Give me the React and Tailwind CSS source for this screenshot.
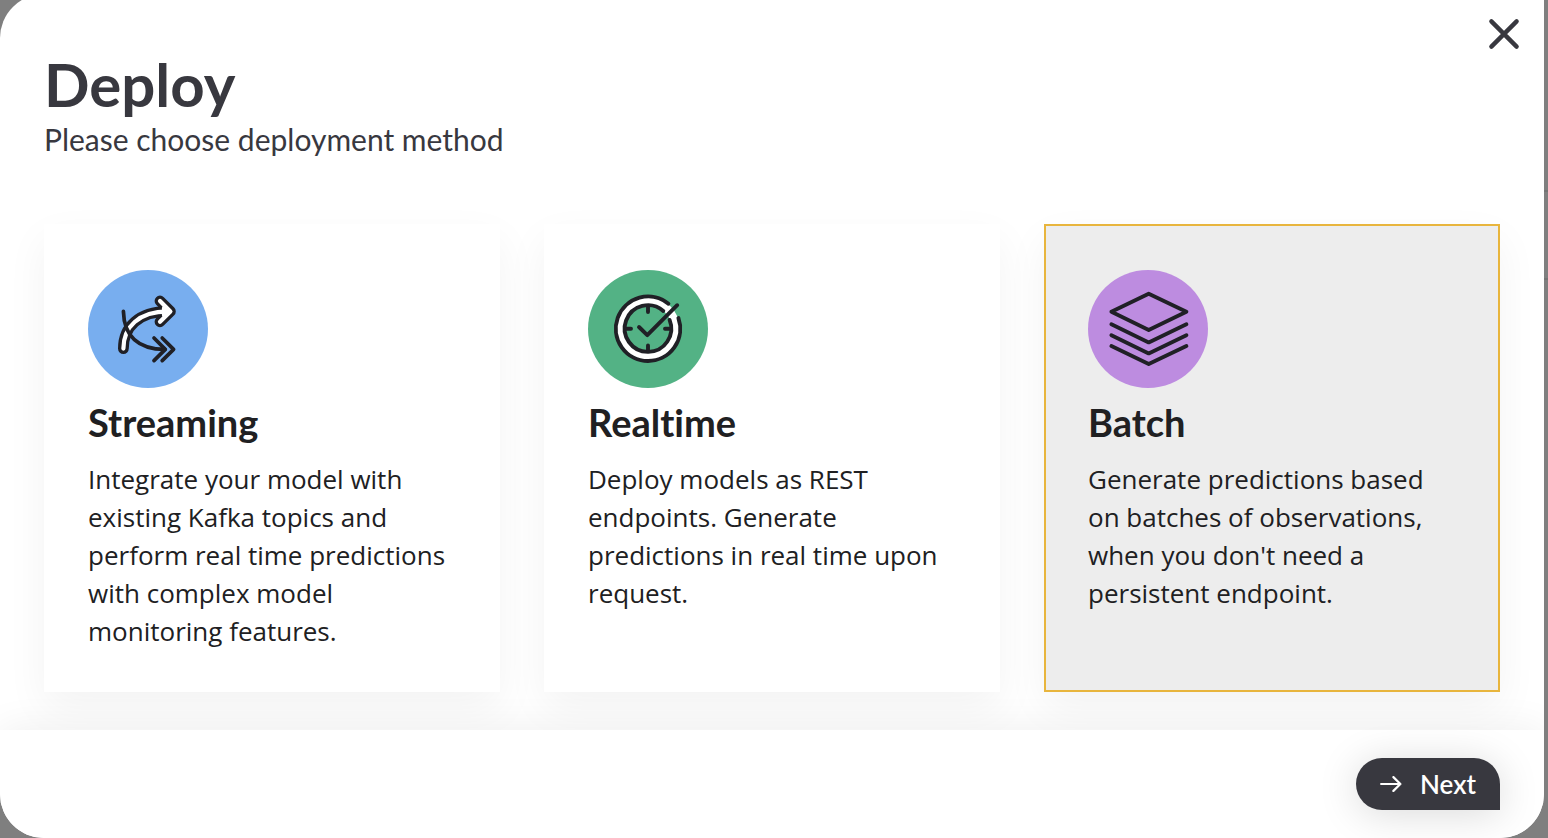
import { useState } from "react";

function StreamingIcon() {
	return (
		<svg viewBox="0 0 120 118" className="w-[120px] h-[118px]" fill="none" strokeLinecap="round" strokeLinejoin="round" aria-hidden="true">
			<ellipse cx="60" cy="59" rx="60" ry="59" fill="#78AEEF" />
			{/* Thick arrow: dark outline with the white body on top */}
			<g stroke="#202026" strokeWidth="10.8">
				<path d="M35.4 78.6C35.4 57 50.5 41.6 80 41.4" />
				<path d="M72 31L82.4 41.4L72 51.8" />
			</g>
			<g stroke="#ffffff" strokeWidth="4.2">
				<path d="M35.4 78.6C35.4 57 50.5 41.6 80 41.4" />
				<path d="M72 31L82.4 41.4L72 51.8" />
				<path d="M76 38L80 41.4L76 45Z" fill="#ffffff" />
			</g>
			<g stroke="#202026" strokeWidth="3.7">
				<path d="M35.4 41.4C36 66 50 79.4 77 79.4" />
				<path d="M66 68L77.3 79.4L66 90.6" />
				<path d="M74.2 68L85.6 79.4L74.2 90.6" />
			</g>
		</svg>
	);
}

function RealtimeIcon() {
	return (
		<svg viewBox="0 0 120 118" className="w-[120px] h-[118px]" fill="none" strokeLinecap="round" strokeLinejoin="round" aria-hidden="true">
			<ellipse cx="60" cy="59" rx="60" ry="59" fill="#53B285" />
			<circle cx="60" cy="58.7" r="27.7" stroke="#ffffff" strokeWidth="8" />
			<g stroke="#202026" strokeWidth="3.9">
				<path d="M80.4 33.8A32.2 32.2 0 1 0 90.4 48" />
				<path d="M75.3 41A23.3 23.3 0 1 0 81.6 49.9" />
				<path d="M60 37V42M60 75.5V81M38 58.7H43M77 58.7H82" />
				<path d="M51 57L59.3 65.2L89.2 35.2" />
			</g>
		</svg>
	);
}

function BatchIcon() {
	return (
		<svg viewBox="0 0 120 118" className="w-[120px] h-[118px]" fill="none" strokeLinecap="round" strokeLinejoin="round" aria-hidden="true">
			<ellipse cx="60" cy="59" rx="60" ry="59" fill="#BD8CE0" />
			<g stroke="#202026" strokeWidth="3.9">
				<path d="M60.7 23.7L98.4 41.7L60.7 60L23.4 41.7Z" />
				<path d="M23.4 54.3L60.7 72.4L98.4 54.3" />
				<path d="M23.4 65.2L60.7 83.4L98.4 65.2" />
				<path d="M23.4 76.1L60.7 94.1L98.4 76.1" />
			</g>
		</svg>
	);
}

const methods = [
	{
		id: "streaming",
		name: "Streaming",
		icon: StreamingIcon,
		description: "Integrate your model with existing Kafka topics and perform real time predictions with complex model monitoring features.",
	},
	{
		id: "realtime",
		name: "Realtime",
		icon: RealtimeIcon,
		description: "Deploy models as REST endpoints. Generate predictions in real time upon request.",
	},
	{
		id: "batch",
		name: "Batch",
		icon: BatchIcon,
		description: "Generate predictions based on batches of observations, when you don't need a persistent endpoint.",
	},
];

function App() {

	const [selected, setSelected] = useState("batch");

	return (
		<div className="relative min-h-screen overflow-hidden bg-[#7f7f7f] pr-1 font-['Lato',sans-serif] [font-variant-ligatures:none]">

			{/* Table lines of the page behind the dialog */}
			<div className="absolute right-0 top-[190px] h-[90px] w-8 border-y-2 border-[#747474]" />

			{/* Dialog */}
			<div role="dialog" aria-labelledby="deploy-title" className="relative -mt-[6px] flex min-h-[844px] flex-col overflow-hidden rounded-[44px] rounded-tr-none bg-white">

				{/* Header */}
				<header className="flex items-start justify-between pl-11 pr-6 pt-6 text-[#38383f]">
					<div className="pt-8">
						<h1 id="deploy-title" className="text-[60px] leading-[68px] font-bold">Deploy</h1>
						<p className="text-[30px] leading-[42px]">Please choose deployment method</p>
					</div>
					<button type="button" aria-label="Close">
						<svg viewBox="0 0 32 32" className="size-8" fill="none" stroke="currentColor" strokeWidth="4.4" strokeLinecap="round" aria-hidden="true">
							<path d="M3.4 3.4L28.6 28.6M28.6 3.4L3.4 28.6" />
						</svg>
					</button>
				</header>

				{/* Deployment methods */}
				<div role="radiogroup" aria-label="Deployment method" className="grid flex-1 grid-cols-3 gap-11 px-11 pb-[38px] pt-16">
					{methods.map((method) => (
						<label
							key={method.id}
							className={
								"flex cursor-pointer flex-col border-2 px-[42px] pb-[38px] pt-11 text-[#202022] shadow-[0_16px_40px_rgba(0,0,0,0.05)] " +
								(selected === method.id ? "border-[#e8b53d] bg-[#ededed]" : "border-transparent bg-white")
							}
						>
							<input
								type="radio"
								name="method"
								value={method.id}
								checked={selected === method.id}
								onChange={() => setSelected(method.id)}
								className="sr-only"
							/>
							<method.icon />
							<span className="mt-2 text-[38px] leading-[52px] font-bold">{method.name}</span>
							<span className="mt-3 font-['Open_Sans',sans-serif] text-[26px] leading-[38px]">{method.description}</span>
						</label>
					))}
				</div>

				{/* Footer */}
				<footer className="flex justify-end bg-white px-11 py-7 shadow-[0_0_40px_rgba(0,0,0,0.07)]">
					<button
						type="button"
						className="flex h-[52px] items-center gap-[18px] rounded-[26px] rounded-br-none bg-[#38383f] px-6 text-[26px] font-semibold text-white shadow-[0_4px_40px_rgba(0,0,0,0.15)]"
					>
						<svg viewBox="0 0 22 16" className="h-4 w-[22px]" fill="none" stroke="currentColor" strokeWidth="2.2" strokeLinecap="round" strokeLinejoin="round" aria-hidden="true">
							<path d="M1.1 8H20.4M13.4 1.1L20.4 8L13.4 14.9" />
						</svg>
						Next
					</button>
				</footer>

			</div>

		</div>
	);
}

export default App;
